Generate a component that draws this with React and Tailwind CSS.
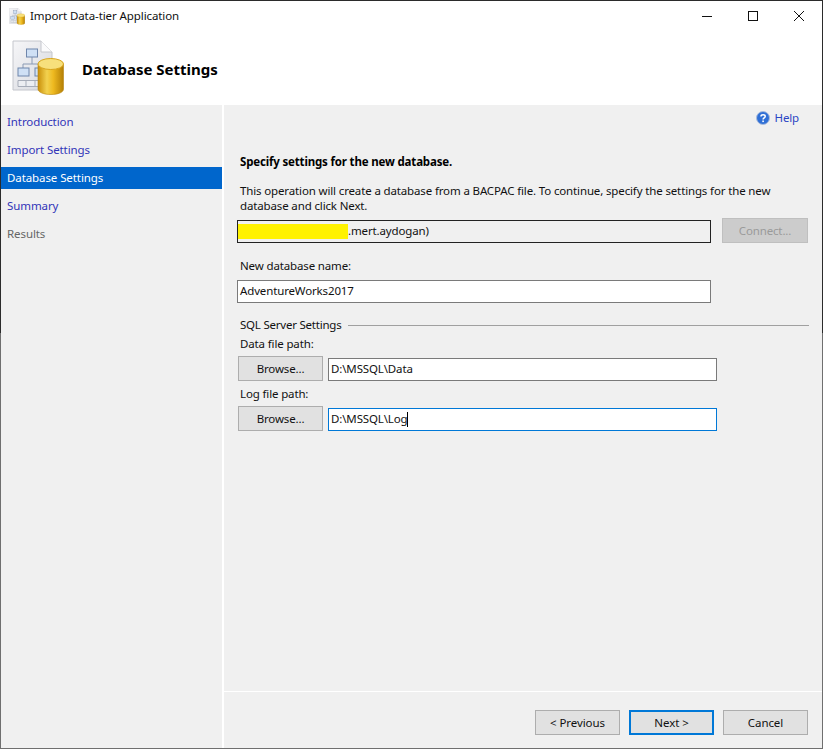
const steps = ['Introduction', 'Import Settings', 'Database Settings', 'Summary', 'Results']

function WizardIcon({ className }) {
  return (
    <svg viewBox="0 0 52 55" className={className}>
      <defs>
        <linearGradient id="cyl" x1="0" x2="1" y1="0" y2="0">
          <stop offset="0" stopColor="#c98f0a" />
          <stop offset="0.35" stopColor="#f2d14f" />
          <stop offset="0.6" stopColor="#eeb91f" />
          <stop offset="1" stopColor="#b47f06" />
        </linearGradient>
        <linearGradient id="doc" x1="0" x2="1" y1="0" y2="1">
          <stop offset="0" stopColor="#f6f6f8" />
          <stop offset="1" stopColor="#d6d8de" />
        </linearGradient>
      </defs>
      <path d="M1 1H29L40 12V50H1Z" fill="url(#doc)" stroke="#c4c6cc" />
      <path d="M29 1V12H40" fill="#fbfbfc" stroke="#c4c6cc" />
      <path d="M20 17V24M11 28V24H29V28" fill="none" stroke="#8a9ab4" />
      <rect x="14.500" y="9" width="11" height="8" fill="#cfe0f5" stroke="#6f86ab" />
      <rect x="6" y="28" width="11" height="8" fill="#cfe0f5" stroke="#6f86ab" />
      <rect x="23" y="28" width="11" height="8" fill="#cfe0f5" stroke="#6f86ab" />
      <path d="M6 40.500H32V46.500H6ZM14 40.500V46.500M23 40.500V46.500" fill="#eceef2" stroke="#a7adb9" />
      <path d="M26 24V49C26 52.500 32 54.500 39 54.500S51.500 52.500 51.500 49V24Z" fill="url(#cyl)" stroke="#b9870f" strokeWidth="0.6" />
      <ellipse cx="38.750" cy="24" rx="12.750" ry="5.500" fill="#f7e07c" stroke="#d8a51d" />
    </svg>
  )
}

function HelpIcon() {
  return (
    <svg viewBox="0 0 14 14" className="w-[14px] h-[14px]">
      <circle cx="7" cy="7" r="6.500" fill="#2f6fd6" stroke="#a9bcdc" />
      <path d="M5 5.400C5 3.300 9.200 3.300 9.200 5.400C9.200 6.900 7.100 6.900 7.100 8.500" fill="none" stroke="#fff" strokeWidth="1.500" />
      <rect x="6.300" y="9.500" width="1.600" height="1.600" fill="#fff" />
    </svg>
  )
}

function Button({ children, primary }) {
  return (
    <button className={`w-[85px] h-[25px] shrink-0 bg-[#e1e1e1] text-[#111] flex items-center justify-center ${primary ? 'border-2 border-[#0078d7]' : 'border border-[#adadad]'}`}>
      {children}
    </button>
  )
}

function Field({ children, className = '' }) {
  return (
    <div className={`h-[23px] bg-white border flex items-center pb-px ${className}`}>
      {children}
    </div>
  )
}

export default function App() {
  return (
    <div className="relative w-[823px] h-[749px] bg-white overflow-hidden font-['Noto_Sans',sans-serif] text-[11.5px] tracking-[-0.09px] text-[#111] flex flex-col">
      {/* Window frame */}
      <div className="absolute left-0 top-0 w-full h-px bg-[#2b2b2b]"></div>
      <div className="absolute left-0 top-0 w-px h-[333px] bg-[#2b2b2b]"></div>
      <div className="absolute left-0 top-[333px] w-px h-[416px] bg-[#6f6f6f]"></div>
      <div className="absolute right-0 top-0 w-px h-[333px] bg-[#2b2b2b]"></div>
      <div className="absolute right-0 top-[333px] w-px h-[416px] bg-[#6f6f6f]"></div>
      <div className="absolute left-0 bottom-0 w-full h-px bg-[#6f6f6f]"></div>

      {/* Title bar */}
      <div className="h-[31px] shrink-0 flex items-center pt-px pl-[9px] pr-px">
        <WizardIcon className="w-[16px] h-[17px]" />
        <span className="ml-[5px] mb-px">Import Data-tier Application</span>
        <div className="ml-auto flex">
          <div className="w-[46px] h-[30px] flex items-center justify-center">
            <svg viewBox="0 0 10 10" className="w-[10px] h-[10px]"><path d="M0 5.500H10" stroke="#111" /></svg>
          </div>
          <div className="w-[46px] h-[30px] flex items-center justify-center">
            <svg viewBox="0 0 10 10" className="w-[10px] h-[10px]"><rect x="0.500" y="0.500" width="9" height="9" fill="none" stroke="#111" /></svg>
          </div>
          <div className="w-[46px] h-[30px] flex items-center justify-center">
            <svg viewBox="0 0 10 10" className="w-[10px] h-[10px]"><path d="M0 0L10 10M10 0L0 10" stroke="#111" /></svg>
          </div>
        </div>
      </div>

      {/* Header */}
      <div className="h-[74px] shrink-0 flex items-center pl-[12px]">
        <WizardIcon className="w-[52px] h-[55px] mt-[-1px]" />
        <h1 className="ml-[18px] text-[15px] tracking-normal font-bold text-black mt-[2px]">Database Settings</h1>
      </div>

      <div className="flex-1 flex min-h-0 pl-px pr-px pb-px">
        {/* Sidebar */}
        <div className="w-[221px] shrink-0 bg-[#f0f0f0] pt-[6px] flex flex-col gap-[6px]">
          {steps.map((step, i) => (
            <div
              key={step}
              className={`h-[22px] flex items-center pl-[6px] pb-px ${
                i === 2 ? 'bg-[#0066cc] text-white' : i === 4 ? 'text-[#666]' : 'text-[#3235b8]'
              }`}
            >
              {step}
            </div>
          ))}
        </div>

        {/* Main */}
        <div className="ml-[2px] flex-1 bg-[#f0f0f0] flex flex-col">
          <div className="flex-1 px-[13px] tracking-[-0.14px]">
            <div className="mt-[4px] h-[18px] flex items-center justify-end pr-[10px]">
              <HelpIcon />
              <span className="text-[#2b45c4] ml-[1px] w-[28px] text-right">Help</span>
            </div>
            <div className="mt-[27px] h-[16px] leading-[16px] pl-[3px] font-bold tracking-[-0.17px] text-black">Specify settings for the new database.</div>
            <p className="mt-[13px] w-[570px] pl-[3px] leading-[15px]">
              This operation will create a database from a BACPAC file. To continue, specify the settings for the new database and click Next.
            </p>
            <div className="mt-[5px] flex items-end">
              <div className="w-[474px] h-[23px] border border-[#222] pb-px flex items-center overflow-hidden">
                <span className="w-[110px] h-[15px] mt-px bg-[#fff200] shrink-0"></span>
                <span>.mert.aydogan)</span>
              </div>
              <button className="ml-[11px] w-[86px] h-[25px] bg-[#cccccc] border border-[#bfbfbf] text-[#9a9a9a] flex items-center justify-center">Connect...</button>
            </div>
            <div className="mt-[15px] h-[16px] leading-[16px] pl-[3px]">New database name:</div>
            <Field className="mt-[6px] w-[474px] border-[#7a7a7a] pl-[2px]">AdventureWorks2017</Field>
            <div className="mt-[14px] h-[16px] flex items-center pl-[3px]">
              <span className="tracking-[-0.22px]">SQL Server Settings</span>
              <div className="flex-1 h-px bg-[#a0a0a0] ml-[6px]"></div>
            </div>
            <div className="mt-[3px] h-[16px] leading-[16px] pl-[3px]">Data file path:</div>
            <div className="mt-[4px] flex items-end pl-px">
              <Button>Browse...</Button>
              <Field className="ml-[5px] w-[389px] border-[#7a7a7a] pl-[2px]">D:\MSSQL\Data</Field>
            </div>
            <div className="mt-[5px] h-[16px] leading-[16px] pl-[3px]">Log file path:</div>
            <div className="mt-[4px] flex items-end pl-px">
              <Button>Browse...</Button>
              <Field className="ml-[5px] w-[389px] border-[#0078d7] pl-[2px]">
                D:\MSSQL\Log
                <span className="w-px h-[15px] mt-px bg-black"></span>
              </Field>
            </div>
          </div>

          {/* Footer */}
          <div className="h-[57px] shrink-0 border-t border-white pt-[18px] pr-[14px] flex justify-end gap-[9px]">
            <Button>&lt; Previous</Button>
            <Button primary>Next &gt;</Button>
            <Button>Cancel</Button>
          </div>
        </div>
      </div>
    </div>
  )
}
